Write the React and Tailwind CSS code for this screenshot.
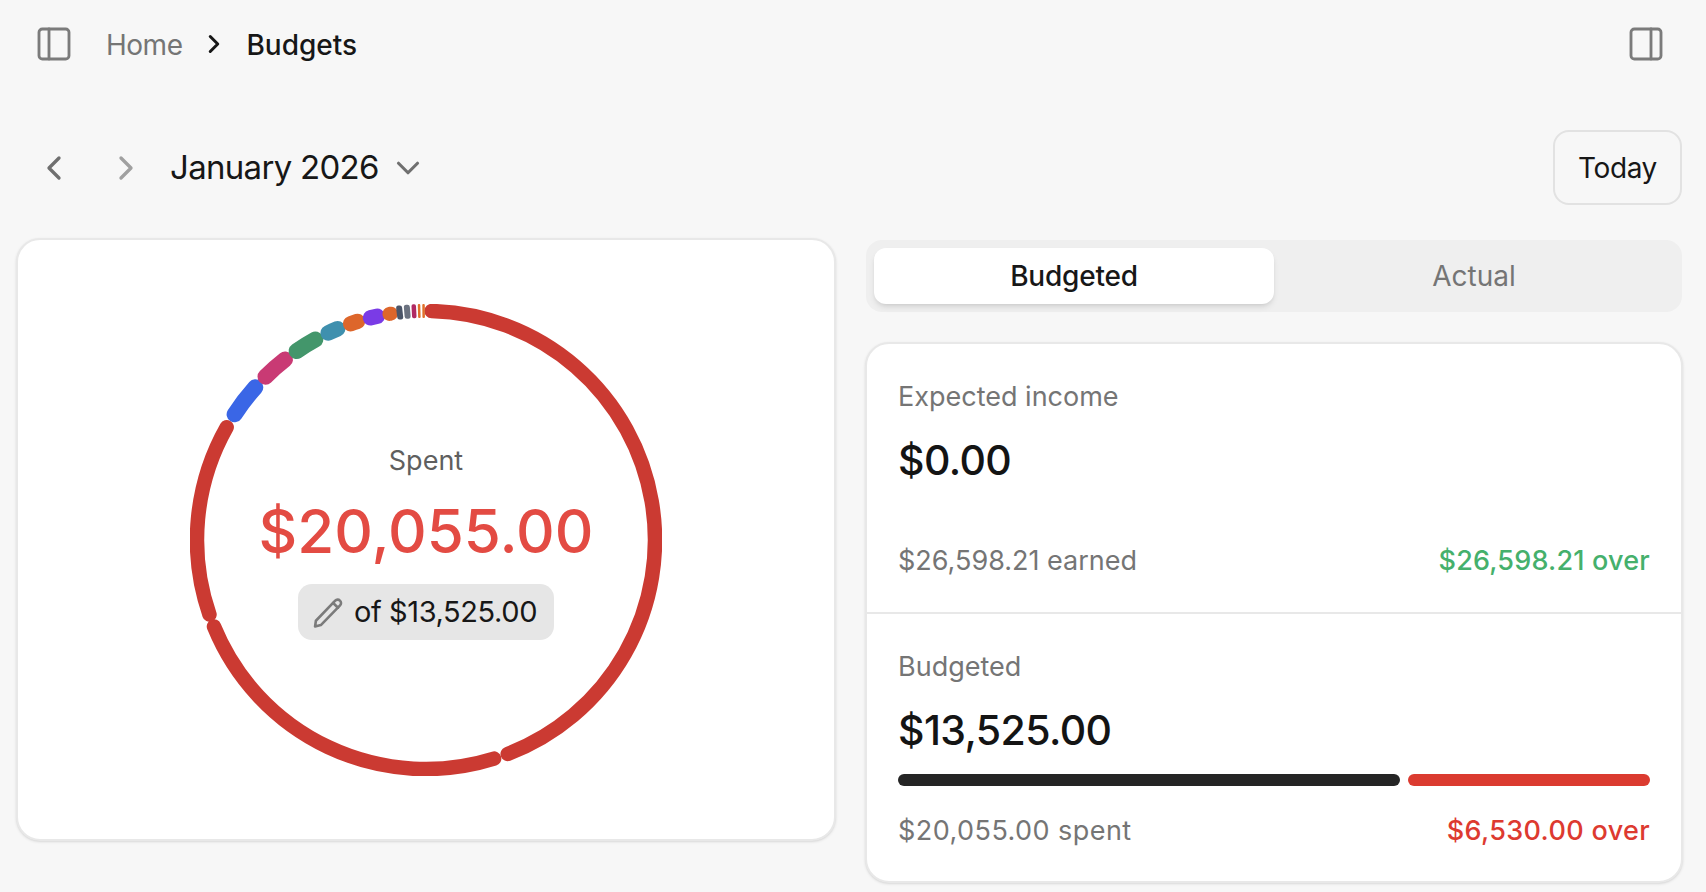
import React from "react";
import { PanelLeft, PanelRight, ChevronLeft, ChevronRight, ChevronDown } from "lucide-react";

const C = 236, R = 229;
const pt = (deg, r = R) => {
  const a = (deg * Math.PI) / 180;
  return [C + r * Math.sin(a), C - r * Math.cos(a)];
};
const arc = (a, b) => {
  const [x1, y1] = pt(a);
  const [x2, y2] = pt(b);
  return `M${x1.toFixed(2)} ${y1.toFixed(2)}A${R} ${R} 0 ${b - a > 180 ? 1 : 0} 1 ${x2.toFixed(2)} ${y2.toFixed(2)}`;
};
const arcs = [
  [1.4, 159.1, "#cb3a32", 14.5],
  [162.7, 247.8, "#cb3a32", 14.5],
  [251, 299.5, "#cb3a32", 14.5],
  [303.3, 311.8, "#3a66e6", 16],
  [315.5, 322, "#c93a74", 16],
  [325.6, 331.1, "#43966b", 16],
  [334.7, 337.3, "#3f90ae", 15.5],
  [340.8, 342.6, "#dd662b", 15.5],
  [346, 347.7, "#7a3be6", 15.5],
  [350.8, 351.2, "#dd662b", 14],
];
const ticks = [
  [353.4, 6, "#4b5568"],
  [355.3, 6, "#6b7280"],
  [357, 4.5, "#b02a63"],
  [358.3, 2.5, "#e0702a"],
  [359.4, 2.5, "#e0702a"],
];

function Ring() {
  return (
    <svg width="472" height="472" viewBox="0 0 472 472" fill="none">
      {arcs.map(([a, b, c, w], i) => (
        <path key={i} d={arc(a, b)} stroke={c} strokeWidth={w} strokeLinecap="round" />
      ))}
      {ticks.map(([a, w, c], i) => (
        <rect key={i} x={C - w / 2} y={C - R - 7} width={w} height="14" rx={w / 2.4} fill={c} transform={`rotate(${a} ${C} ${C})`} />
      ))}
    </svg>
  );
}

function PencilIcon() {
  return (
    <svg width="31" height="31" viewBox="0 0 30 30" fill="none" stroke="#7b7b7b" strokeWidth="2.5" strokeLinejoin="round" strokeLinecap="round">
      <path d="M2 28.5 2.8 23 21.5 3.6a3.2 3.2 0 0 1 4.6-.1 3.2 3.2 0 0 1 .1 4.6L7.6 27.2Z" />
      <path d="M19.5 5.8 24.2 10.4" />
    </svg>
  );
}

function Stat({ label, value, children }) {
  return (
    <div className="flex flex-col px-[31px]">
      <div className="text-[27px] leading-[36px] text-[#757575]">{label}</div>
      <div className="mt-[27px] text-[41px] leading-[36px] font-medium tracking-[-0.6px] text-[#141414]">{value}</div>
      {children}
    </div>
  );
}

export default function App() {
  return (
    <div className="h-[892px] w-[1706px] overflow-hidden bg-[#f7f7f7] font-['Inter',sans-serif] text-[#171717]">
      <header className="flex h-[88px] items-center justify-between pl-[34px] pr-[40px]">
        <div className="flex items-center">
          <PanelLeft size={40} strokeWidth={1.7} color="#7b7b7b" />
          <span className="ml-[32px] mt-[2px] text-[28px] tracking-[-0.5px] text-[#757575]">Home</span>
          <ChevronRight size={30} strokeWidth={2.4} color="#171717" className="ml-[17px]" />
          <span className="ml-[17px] mt-[2px] text-[28px] font-[450] text-[#171717]">Budgets</span>
        </div>
        <PanelRight size={40} strokeWidth={1.7} color="#7b7b7b" />
      </header>

      <div className="mt-[42px] flex h-[75px] items-center justify-between pl-[34px] pr-[24px]">
        <div className="flex items-center">
          <ChevronLeft size={40} strokeWidth={2} color="#6f6f6f" />
          <ChevronRight size={40} strokeWidth={2} color="#a0a0a0" className="ml-[32px]" />
          <span className="ml-[24px] mt-[1px] text-[33px] font-[420] tracking-[-0.7px] text-[#171717]">January 2026</span>
          <ChevronDown size={38} strokeWidth={2} color="#707070" className="ml-[10px]" />
        </div>
        <div className="flex h-[75px] w-[129px] items-center justify-center rounded-[16px] border-2 border-[#e2e2e2] text-[28px] tracking-[-0.4px]">Today</div>
      </div>

      <main className="mt-[33px] flex gap-[29px] pl-[16px] pr-[23px]">
        <section className="relative flex h-[603px] w-[820px] items-center justify-center rounded-[24px] border-2 border-[#e8e8e8] bg-white shadow-sm">
          <Ring />
          <div className="absolute inset-0 flex flex-col items-center pt-[203px]">
            <div className="text-[27px] leading-[36px] text-[#5f5f5f]">Spent</div>
            <div className="mt-[14px] text-[60px] leading-[76px] font-[450] text-[#e34b43]">$20,055.00</div>
            <div className="mt-[15px] flex h-[56px] w-[256px] items-center justify-center gap-[10px] rounded-[14px] bg-[#e6e6e6] pr-[2px]">
              <PencilIcon />
              <span className="text-[29px] tracking-[-0.4px] text-[#171717]">of $13,525.00</span>
            </div>
          </div>
        </section>

        <section className="flex w-[818px] flex-col gap-[30px] pt-[2px]">
          <div className="mx-px flex h-[72px] rounded-[16px] bg-[#efefef] p-[8px]">
            <div className="flex flex-1 items-center justify-center rounded-[12px] bg-white text-[28px] font-medium tracking-[-0.2px] text-[#171717] shadow-md">Budgeted</div>
            <div className="flex flex-1 items-center justify-center text-[28px] text-[#757575]">Actual</div>
          </div>

          <div className="flex h-[541px] flex-col rounded-[24px] border-2 border-[#e8e8e8] bg-white shadow-sm">
            <div className="h-[270px] border-b-2 border-[#e8e8e8] pt-[35px]">
              <Stat label="Expected income" value="$0.00">
                <div className="mt-[65px] flex justify-between text-[27px] leading-[36px]">
                  <span className="text-[#757575]">$26,598.21 earned</span>
                  <span className="font-[450] tracking-[0.2px] text-[#45b06c]">$26,598.21 over</span>
                </div>
              </Stat>
            </div>
            <div className="pt-[35px]">
              <Stat label="Budgeted" value="$13,525.00">
                <div className="mt-[26px] flex gap-[8px]">
                  <div className="h-[12px] w-[502px] rounded-full bg-[#252525]" />
                  <div className="h-[12px] flex-1 rounded-full bg-[#db3b30]" />
                </div>
                <div className="mt-[27px] flex justify-between text-[27px] leading-[36px]">
                  <span className="text-[#757575] tracking-[0.45px]">$20,055.00 spent</span>
                  <span className="font-[450] tracking-[0.35px] text-[#dd3a30]">$6,530.00 over</span>
                </div>
              </Stat>
            </div>
          </div>
        </section>
      </main>
    </div>
  );
}
